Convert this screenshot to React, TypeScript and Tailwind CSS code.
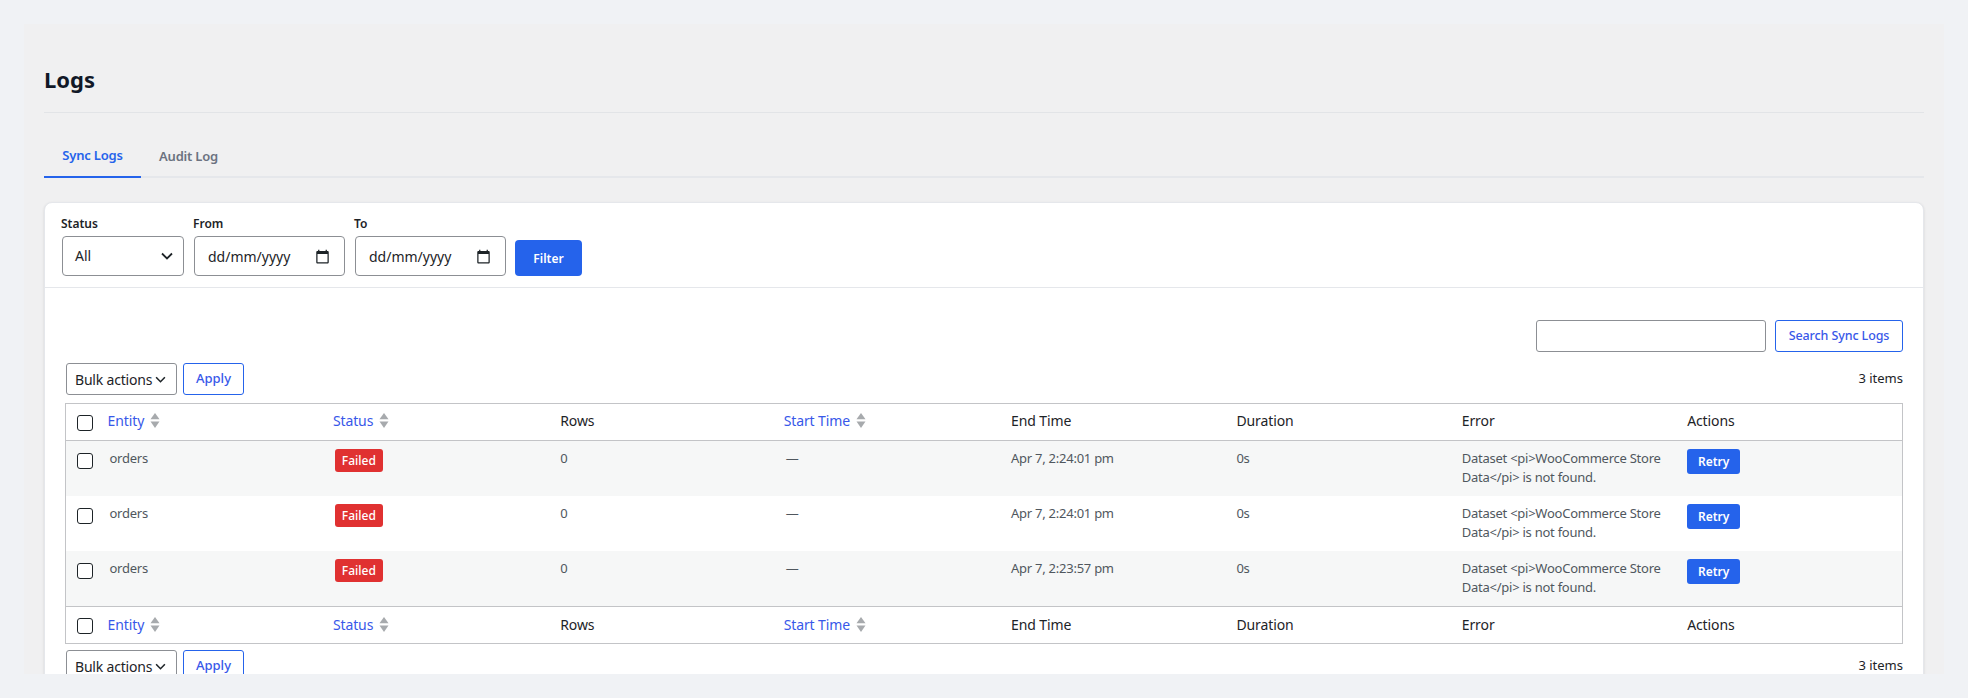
const font = "font-['Noto_Sans',sans-serif]";

function SortIcon() {
  return (
    <svg viewBox="0 0 10 15" className="w-[10px] h-[15px] ml-[6px] shrink-0" fill="#a7aaad">
      <path d="M5 0 9.5 6.2H.5z" />
      <path d="M.5 8.5h9L5 15z" />
    </svg>
  );
}

function Chevron({ className }: { className: string }) {
  return (
    <svg viewBox="0 0 12 8" className={className} fill="none" stroke="#1d2327" strokeWidth="1.8">
      <path d="M1 1.5 6 6.5 11 1.5" />
    </svg>
  );
}

function CalendarIcon() {
  return (
    <svg viewBox="0 0 24 24" className="w-[15px] h-[15px]" fill="#1d2327">
      <path d="M20 3h-1V1h-2v2H7V1H5v2H4c-1.1 0-2 .9-2 2v16c0 1.1.9 2 2 2h16c1.1 0 2-.9 2-2V5c0-1.1-.9-2-2-2zm0 18H4V8h16v13z" />
    </svg>
  );
}

function DateField({ label }: { label: string }) {
  return (
    <div className="flex flex-col">
      <label className="text-[12px] leading-[16px] font-semibold text-[#1d2327] mb-[4px] -ml-px">{label}</label>
      <div className="w-[151px] h-[40px] border border-[#8c8f94] rounded-[4px] bg-white flex items-center justify-between pl-[13px] pr-[14px] text-[14px] text-[#1d2327]">
        <span>dd/mm/yyyy</span>
        <CalendarIcon />
      </div>
    </div>
  );
}

function Check() {
  return <div className="w-4 h-4 border border-[#1d2327] rounded-[3px] bg-white" />;
}

function BulkRow({ className }: { className?: string }) {
  return (
    <div className={`flex items-center justify-between ${className ?? ""}`}>
      <div className="flex items-center gap-[6px] ml-px">
        <div className="w-[111px] h-[32px] border border-[#8c8f94] rounded-[3px] bg-white flex items-center pl-[8px] text-[14px] tracking-[-0.2px] text-[#1d2327]">
          Bulk actions
          <Chevron className="w-[11px] h-[7px] ml-[3px]" />
        </div>
        <button className="w-[61px] h-[32px] border border-[#2563eb] rounded-[3px] bg-white text-[13px] font-medium text-[#3858e9]">
          Apply
        </button>
      </div>
      <span className="text-[13px] text-[#1d2327]">3 items</span>
    </div>
  );
}

function HeaderCells({ border, top }: { border: string; top?: boolean }) {
  const base = `h-[37px] font-normal text-left align-middle text-[14px] tracking-[-0.1px] ${border}`;
  const th = `${base} ${top ? "pb-[3px]" : "pb-[2px]"}`;
  const sortable = (label: string) => (
    <th className={th}>
      <a className="flex items-center pl-[8px] text-[#3858e9]">
        {label}
        <SortIcon />
      </a>
    </th>
  );
  const plain = (label: string) => <th className={`${th} pl-[10px] text-[#1d2327]`}>{label}</th>;
  return (
    <tr>
      <th className={`${base} pl-[11px] pt-[1px]`}>
        <Check />
      </th>
      {sortable("Entity")}
      {sortable("Status")}
      {plain("Rows")}
      {sortable("Start Time")}
      {plain("End Time")}
      {plain("Duration")}
      {plain("Error")}
      {plain("Actions")}
    </tr>
  );
}

const rows = ["Apr 7, 2:24:01 pm", "Apr 7, 2:24:01 pm", "Apr 7, 2:23:57 pm"];

export default function App() {
  return (
    <div className={`h-[698px] bg-[#f0f2f5] p-[24px] ${font}`}>
      <div className="h-full bg-[#f0f0f1] overflow-hidden px-[20px]">
        <div className="h-[89px] border-b border-[#e2e4e7] pt-[39px]">
          <h1 className="text-[22px] leading-[32px] font-bold text-[#111827]">Logs</h1>
        </div>
        <div className="flex h-[65px] items-end border-b-2 border-[#e5e7eb]">
          <div className="h-[39px] w-[97px] -mb-[2px] pb-[4px] border-b-2 border-[#2563eb] flex items-center justify-center text-[13px] tracking-[-0.2px] font-semibold text-[#2563eb]">
            Sync Logs
          </div>
          <div className="h-[39px] w-[97px] -mb-[2px] pb-[4px] flex items-center justify-center text-[13px] tracking-[-0.2px] font-semibold text-[#6b7280] -ml-px">
            Audit Log
          </div>
        </div>
        <div className="mt-[24px] bg-white rounded-t-[8px] border border-[#e5e7eb] shadow-sm min-h-[600px]">
          <div className="h-[85px] border-b border-[#e5e7eb] flex items-end gap-[10px] px-[17px] pb-[11px]">
            <div className="flex flex-col">
              <label className="text-[12px] leading-[16px] font-semibold text-[#1d2327] mb-[4px] -ml-px">Status</label>
              <div className="w-[122px] h-[40px] border border-[#8c8f94] rounded-[4px] bg-white flex items-center justify-between pl-[12px] pr-[10px] text-[14px] text-[#1d2327]">
                <span className="-mt-[2px]">All</span>
                <Chevron className="w-[12px] h-[8px]" />
              </div>
            </div>
            <DateField label="From" />
            <DateField label="To" />
            <button className="w-[67px] h-[36px] -ml-px pt-[1px] bg-[#2563eb] rounded-[4px] text-white text-[12px] font-semibold">Filter</button>
          </div>
          <div className="px-[20px] pt-[32px]">
            <div className="flex justify-end gap-[9px]">
              <div className="w-[230px] h-[32px] border border-[#8c8f94] rounded-[3px] bg-white" />
              <button className="w-[128px] h-[32px] border border-[#2563eb] rounded-[3px] bg-white text-[12.5px] font-medium tracking-[-0.1px] text-[#3858e9]">
                Search Sync Logs
              </button>
            </div>
            <BulkRow className="mt-[11px]" />
            <table className="w-[1838px] mt-[8px] table-fixed border-collapse border border-[#c3c4c7] bg-white">
              <colgroup>
                <col className="w-[34px]" />
              </colgroup>
              <thead>
                <HeaderCells border="border-b border-[#c3c4c7]" top />
              </thead>
              <tbody>
                {rows.map((time, i) => (
                  <tr key={i} className={`${i === 2 ? "h-[56px]" : "h-[55px]"} align-top text-[13px] leading-[19px] tracking-[-0.25px] text-[#50575e] ${i % 2 === 0 ? "bg-[#f6f7f7]" : "bg-white"}`}>
                    <td className="pl-[11px] pt-[12px]">
                      <Check />
                    </td>
                    <td className="pl-[10px] pt-[8px]">orders</td>
                    <td className="pl-[10px] pt-[8px]">
                      <span className="inline-flex items-center justify-center w-[48px] h-[23px] rounded-[3px] bg-[#e03131] text-white text-[12px] font-medium tracking-normal">
                        Failed
                      </span>
                    </td>
                    <td className="pl-[10px] pt-[8px]">0</td>
                    <td className="pl-[10px] pt-[8px]">—</td>
                    <td className="pl-[10px] pt-[8px]">{time}</td>
                    <td className="pl-[10px] pt-[8px]">0s</td>
                    <td className="pl-[10px] pt-[8px]">
                      Dataset &lt;pi&gt;WooCommerce Store Data&lt;/pi&gt; is not found.
                    </td>
                    <td className="pl-[10px] pt-[8px]">
                      <button className="w-[53px] h-[25px] rounded-[3px] bg-[#2563eb] text-white text-[12px] font-semibold tracking-normal">Retry</button>
                    </td>
                  </tr>
                ))}
              </tbody>
              <tfoot>
                <HeaderCells border="border-t border-[#c3c4c7]" />
              </tfoot>
            </table>
            <BulkRow className="mt-[6px]" />
          </div>
        </div>
      </div>
    </div>
  );
}
